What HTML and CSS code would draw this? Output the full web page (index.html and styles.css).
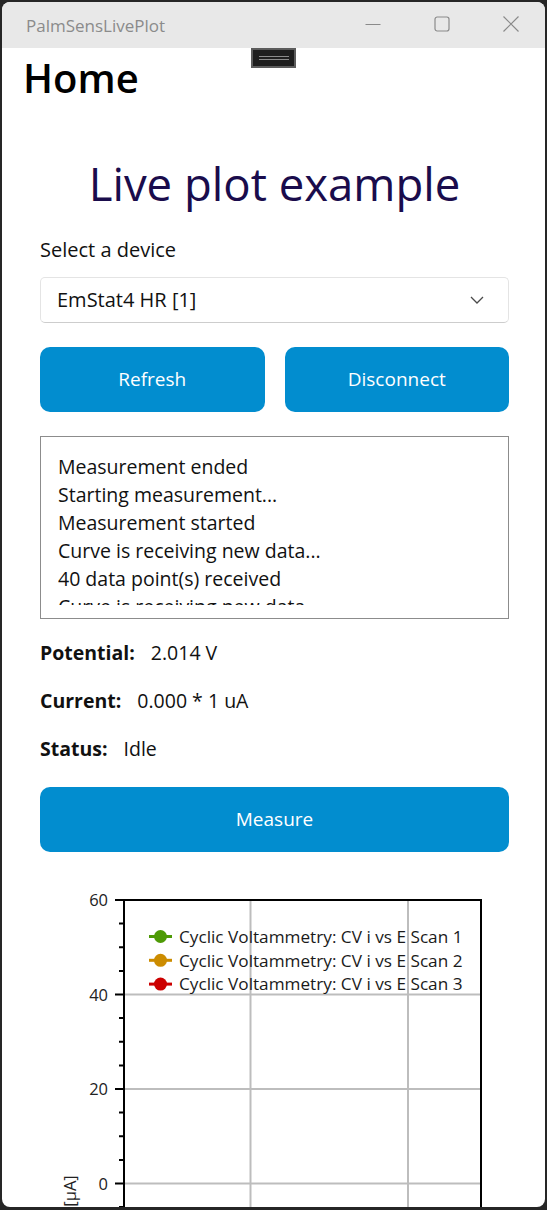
FILE: index.html
```html
<!DOCTYPE html>
<html lang="en">
<head>
<meta charset="utf-8">
<title>PalmSensLivePlot</title>
<link rel="stylesheet" href="styles.css">
</head>
<body>
<div class="window">
  <div class="titlebar">
    <span class="title">PalmSensLivePlot</span>
    <div class="caption">
      <div class="cap-btn">
        <svg width="16" height="16" viewBox="0 0 16 16"><path d="M0.5 8.5H15.5" stroke="#8a8a8a" stroke-width="1.2" fill="none"/></svg>
      </div>
      <div class="cap-btn">
        <svg width="16" height="16" viewBox="0 0 16 16"><rect x="1" y="1" width="14" height="14" rx="2.2" stroke="#8a8a8a" stroke-width="1.2" fill="none"/></svg>
      </div>
      <div class="cap-btn">
        <svg width="16" height="16" viewBox="0 0 16 16"><path d="M0.5 0.5L15.5 15.5M15.5 0.5L0.5 15.5" stroke="#8a8a8a" stroke-width="1.2" fill="none"/></svg>
      </div>
    </div>
  </div>
  <div class="handle"></div>

  <h1 class="home">Home</h1>

  <main class="content">
    <h2 class="headline">Live plot example</h2>

    <label class="label">Select a device</label>
    <div class="picker">
      <span>EmStat4 HR [1]</span>
      <svg class="chevron" width="14" height="8" viewBox="0 0 14 8"><path d="M1 1L7 7L13 1" stroke="#4a4a4a" stroke-width="1.3" fill="none"/></svg>
    </div>

    <div class="btn-row">
      <button class="btn">Refresh</button>
      <button class="btn">Disconnect</button>
    </div>

    <div class="log">
      <div class="log-lines">
        <div>Measurement ended</div>
        <div>Starting measurement...</div>
        <div>Measurement started</div>
        <div>Curve is receiving new data...</div>
        <div>40 data point(s) received</div>
        <div>Curve is receiving new data...</div>
      </div>
    </div>

    <div class="info"><b>Potential:</b><span>2.014 V</span></div>
    <div class="info"><b>Current:</b><span>0.000 * 1 uA</span></div>
    <div class="info"><b>Status:</b><span>Idle</span></div>

    <button class="btn btn-wide">Measure</button>

    <svg class="chart" width="469" height="340" viewBox="0 0 469 340">
      <g stroke="#bdbdbd" stroke-width="2" fill="none">
        <path d="M84 113.5H441M84 208H441M84 302.5H441"/>
        <path d="M210.5 19V340M368 19V340"/>
      </g>
      <g stroke="#000" stroke-width="2" fill="none">
        <path d="M84 18V340M83 19H442M441 18V340"/>
        <path d="M75 19H84M75 113.5H84M75 208H84M75 302.5H84"/>
        <path d="M79 42.6H84M79 66.3H84M79 89.9H84M79 137.1H84M79 160.8H84M79 184.4H84M79 231.6H84M79 255.3H84M79 278.9H84M79 326.1H84"/>
      </g>
      <g class="tick" text-anchor="end">
        <text x="68" y="25">60</text>
        <text x="68" y="119.5">40</text>
        <text x="68" y="214">20</text>
        <text x="68" y="308.5">0</text>
      </g>
      <text class="tick" transform="translate(36 310) rotate(-90)" text-anchor="middle">[µA]</text>
      <g stroke-width="3">
        <path d="M109 55.5H132" stroke="#4e9a06"/>
        <circle cx="120.5" cy="55.5" r="6.5" fill="#4e9a06" stroke="none"/>
        <path d="M109 79.3H132" stroke="#cc8c00"/>
        <circle cx="120.5" cy="79.3" r="6.5" fill="#cc8c00" stroke="none"/>
        <path d="M109 103.1H132" stroke="#cc0000"/>
        <circle cx="120.5" cy="103.1" r="6.5" fill="#cc0000" stroke="none"/>
      </g>
      <g class="legend">
        <text x="139" y="61.7">Cyclic Voltammetry: CV i vs E Scan 1</text>
        <text x="139" y="85.5">Cyclic Voltammetry: CV i vs E Scan 2</text>
        <text x="139" y="109.3">Cyclic Voltammetry: CV i vs E Scan 3</text>
      </g>
    </svg>
  </main>
</div>
</body>
</html>
```

FILE: styles.css
```css
html, body {
  margin: 0;
  padding: 0;
}

body {
  background: #262626;
  font-family: "Open Sans", "Noto Sans", sans-serif;
  color: #111;
}

.window {
  position: relative;
  margin: 2px 0 0 2px;
  width: 543px;
  height: 1205px;
  background: #fff;
  border-radius: 8px;
  overflow: hidden;
}

.titlebar {
  height: 46px;
  background: #e8e8e8;
  display: flex;
  align-items: center;
}

.title {
  padding-left: 24px;
  font-size: 17px;
  color: #8b8b8b;
}

.caption {
  margin-left: auto;
  display: flex;
  height: 100%;
}

.cap-btn {
  width: 69px;
  display: flex;
  align-items: center;
  justify-content: center;
  margin-top: -2px;
}

.handle {
  position: absolute;
  left: 249px;
  top: 46px;
  width: 41px;
  height: 16px;
  background: #1e1e1e;
  border: 2px solid #5c5c5c;
}

.handle::before {
  content: "";
  position: absolute;
  left: 6px;
  right: 5px;
  top: 6px;
  height: 2px;
  border-top: 1px solid #8a8a8a;
  border-bottom: 1px solid #8a8a8a;
}

.home {
  margin: 10px 0 0 21px;
  font-size: 40px;
  font-weight: 600;
  line-height: 1;
  color: #000;
}

.content {
  padding: 0 36px 0 38px;
}

.headline {
  margin: 63px 0 0;
  font-size: 45.5px;
  font-weight: 400;
  line-height: 1;
  text-align: center;
  color: #1a0c4c;
}

.label {
  display: block;
  margin-top: 33px;
  font-size: 20px;
  line-height: 1;
}

.picker {
  box-sizing: border-box;
  margin-top: 17px;
  height: 46px;
  border: 1px solid #e4e4e4;
  border-bottom-color: #cdcdcd;
  border-radius: 5px;
  display: flex;
  align-items: center;
  justify-content: space-between;
  padding: 0 24px 0 16px;
  font-size: 20px;
  line-height: 1;
}

.btn-row {
  display: grid;
  grid-template-columns: 1fr 1fr;
  gap: 20px;
  margin-top: 24px;
}

.btn {
  display: block;
  height: 65px;
  border: 0;
  border-radius: 10px;
  background: #028dcf;
  color: #fff;
  font-family: "Open Sans", "Noto Sans", sans-serif;
  font-size: 19px;
  padding: 0;
}

.btn-wide {
  width: 100%;
  margin-top: 28px;
}

.log {
  box-sizing: border-box;
  margin-top: 24px;
  height: 183px;
  border: 1px solid #8c8c8c;
  padding: 16px 18px 0 17px;
  font-size: 19.5px;
  line-height: 28px;
}

.log-lines {
  height: 152px;
  overflow: hidden;
}

.info {
  display: flex;
  gap: 16px;
  font-size: 19.5px;
  line-height: 1;
  margin-top: 28.5px;
}

.log + .info {
  margin-top: 24.5px;
}

.info b {
  font-weight: 700;
}

.chart {
  display: block;
  margin-top: 29px;
}

.tick {
  font-family: "Open Sans", "Noto Sans", sans-serif;
  font-size: 16.5px;
  fill: #222;
}

.legend {
  font-family: "Open Sans", "Noto Sans", sans-serif;
  font-size: 17.2px;
  fill: #1a1a1a;
}
```
